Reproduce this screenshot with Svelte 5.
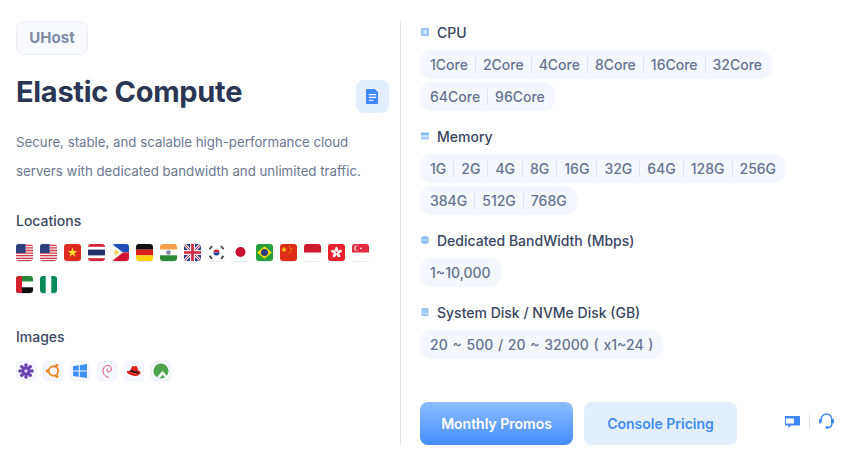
<script>
  const flags = ['us', 'us', 'vn', 'th', 'ph', 'de', 'in', 'gb', 'kr', 'jp', 'br', 'cn', 'id', 'hk', 'sg', 'ae', 'ng'];
  const images = ['rocky', 'ubuntu', 'windows', 'debian', 'redhat', 'alma'];

  const specs = [
    {
      title: 'CPU',
      icon: 'cpu',
      rows: [
        ['1Core', '2Core', '4Core', '8Core', '16Core', '32Core'],
        ['64Core', '96Core']
      ]
    },
    {
      title: 'Memory',
      icon: 'memory',
      rows: [
        ['1G', '2G', '4G', '8G', '16G', '32G', '64G', '128G', '256G'],
        ['384G', '512G', '768G']
      ]
    },
    { title: 'Dedicated BandWidth (Mbps)', icon: 'net', rows: [['1~10,000']] },
    { title: 'System Disk / NVMe Disk (GB)', icon: 'disk', rows: [['20 ~ 500 / 20 ~ 32000 ( x1~24 )']] }
  ];
</script>

{#snippet flag(id)}
  <svg class="flag" viewBox="0 0 17 17" aria-label={id}>
    {#if id === 'us'}
      <rect width="17" height="17" fill="#f6f0f2" />
      <path d="M0 1.300h17M0 3.900h17M0 6.500h17M0 9.100h17M0 11.700h17M0 14.300h17" stroke="#cf3a50" stroke-width="1.300" />
      <rect y="16" width="17" height="1" fill="#cf3a50" />
      <rect width="9.500" height="9" fill="#2b3f7e" />
    {:else if id === 'vn'}
      <rect width="17" height="17" fill="#de2b1f" />
      <path d="M8.500 3.600l1.200 3.400h3.500l-2.800 2.200 1 3.500-2.900-2.100-2.900 2.100 1-3.500L3.800 7h3.500z" fill="#fde02f" />
    {:else if id === 'th'}
      <rect width="17" height="17" fill="#fff" />
      <rect width="17" height="2.800" fill="#d8243c" />
      <rect y="14.200" width="17" height="2.800" fill="#d8243c" />
      <rect y="5.600" width="17" height="5.800" fill="#24316f" />
    {:else if id === 'ph'}
      <rect width="17" height="8.500" fill="#1f50b8" />
      <rect y="8.500" width="17" height="8.500" fill="#d3152f" />
      <path d="M0 0l11 8.500L0 17z" fill="#fbfbf6" />
      <circle cx="4.300" cy="8.500" r="1.900" fill="#f8cf4a" />
      <path d="M4.300 5v7M1.300 8.500h6M2.200 6.400l4.200 4.200M6.400 6.400l-4.200 4.200" stroke="#f8cf4a" stroke-width=".5" />
    {:else if id === 'de'}
      <rect width="17" height="5.700" fill="#111" />
      <rect y="5.700" width="17" height="5.700" fill="#dd1f1c" />
      <rect y="11.300" width="17" height="5.700" fill="#fbd30c" />
    {:else if id === 'in'}
      <rect width="17" height="5.700" fill="#f7a04a" />
      <rect y="5.700" width="17" height="5.700" fill="#fff" />
      <rect y="11.300" width="17" height="5.700" fill="#2a8a34" />
      <circle cx="8.500" cy="8.500" r="2.300" fill="#7f86b4" />
    {:else if id === 'gb'}
      <rect width="17" height="17" fill="#2b3f87" />
      <path d="M0 0l17 17M17 0L0 17" stroke="#f3e6ea" stroke-width="3" />
      <path d="M0 0l17 17M17 0L0 17" stroke="#cf2a43" stroke-width="1" />
      <path d="M8.500 0v17M0 8.500h17" stroke="#f3e6ea" stroke-width="5" />
      <path d="M8.500 0v17M0 8.500h17" stroke="#cf2a43" stroke-width="2.600" />
    {:else if id === 'kr'}
      <rect width="17" height="17" fill="#fff" />
      <path d="M5.500 8.500a3 3 0 0 1 6 0z" fill="#cf2135" />
      <path d="M5.500 8.500a3 3 0 0 0 6 0z" fill="#1c4c9c" />
      <path d="M1.500 5.200l2.600-3M13 2.200l2.600 3M1.500 11.800l2.600 3M13 14.800l2.600-3" stroke="#444" stroke-width="1.800" />
    {:else if id === 'jp'}
      <rect width="17" height="17" fill="#fff" />
      <circle cx="8.500" cy="8" r="5" fill="#c8102e" />
    {:else if id === 'br'}
      <rect width="17" height="17" fill="#25a03a" />
      <path d="M8.500 2.200L16 8.500l-7.500 6.300L1 8.500z" fill="#fbd90e" />
      <circle cx="8.500" cy="8.500" r="3.500" fill="#2d3c85" />
    {:else if id === 'cn'}
      <rect width="17" height="17" fill="#de2d16" />
      <path d="M4 2.600l.8 2.100h2.100L5.200 6l.6 2.100L4 6.900 2.200 8.100 2.800 6 1.100 4.700h2.100z" fill="#fcd21f" />
      <path d="M9 2h1v1H9zM10.500 4h1v1h-1zM10.500 6.500h1v1h-1zM9 8.500h1v1H9z" fill="#fcd21f" />
    {:else if id === 'id'}
      <rect width="17" height="17" fill="#fff" />
      <rect width="17" height="8.500" fill="#cf1a2e" />
    {:else if id === 'hk'}
      <rect width="17" height="17" fill="#e8202c" />
      <g fill="#fff">
        <ellipse cx="8.500" cy="5.300" rx="1.500" ry="2.500" />
        <ellipse cx="8.500" cy="5.300" rx="1.500" ry="2.500" transform="rotate(72 8.500 8.500)" />
        <ellipse cx="8.500" cy="5.300" rx="1.500" ry="2.500" transform="rotate(144 8.500 8.500)" />
        <ellipse cx="8.500" cy="5.300" rx="1.500" ry="2.500" transform="rotate(216 8.500 8.500)" />
        <ellipse cx="8.500" cy="5.300" rx="1.500" ry="2.500" transform="rotate(288 8.500 8.500)" />
      </g>
    {:else if id === 'sg'}
      <rect width="17" height="17" fill="#fff" />
      <rect width="17" height="8.500" fill="#e22a3c" />
      <circle cx="5" cy="4.300" r="2.700" fill="#fff" />
      <circle cx="6" cy="4.300" r="2.500" fill="#e22a3c" />
      <circle cx="9" cy="4.300" r=".9" fill="#fff" />
    {:else if id === 'ae'}
      <rect width="17" height="5.700" fill="#2a8a3a" />
      <rect y="5.700" width="17" height="5.700" fill="#fff" />
      <rect y="11.300" width="17" height="5.700" fill="#111" />
      <rect width="6" height="17" fill="#d4212f" />
    {:else if id === 'ng'}
      <rect width="17" height="17" fill="#fff" />
      <rect width="5.700" height="17" fill="#078a5a" />
      <rect x="11.300" width="5.700" height="17" fill="#078a5a" />
    {/if}
  </svg>
{/snippet}

{#snippet osIcon(id)}
  <span class="os">
    <svg viewBox="0 0 16 16" width="16" height="16" aria-label={id}>
      {#if id === 'rocky'}
        <g fill="#6a3fb0">
          <circle cx="8" cy="8" r="4.800" />
          <circle cx="8" cy="2" r="1.800" />
          <circle cx="8" cy="14" r="1.800" />
          <circle cx="2" cy="8" r="1.800" />
          <circle cx="14" cy="8" r="1.800" />
          <circle cx="3.800" cy="3.800" r="1.800" />
          <circle cx="12.200" cy="3.800" r="1.800" />
          <circle cx="3.800" cy="12.200" r="1.800" />
          <circle cx="12.200" cy="12.200" r="1.800" />
        </g>
        <circle cx="8" cy="8" r="1.800" fill="#d9c8f2" />
      {:else if id === 'ubuntu'}
        <circle cx="8.500" cy="8" r="4.700" fill="none" stroke="#e98a2b" stroke-width="1.900" />
        <circle cx="2.400" cy="8" r="1.700" fill="#e98a2b" />
        <circle cx="11.800" cy="2.400" r="1.700" fill="#e98a2b" />
        <circle cx="11.800" cy="13.600" r="1.700" fill="#e98a2b" />
      {:else if id === 'windows'}
        <path d="M1 3.200l5.800-.9v5.300H1zM7.800 2.200L15 1v6.600H7.800zM1 8.500h5.800v5.300L1 12.900zM7.800 8.500H15V15l-7.200-1.100z" fill="#3d8ff5" />
      {:else if id === 'debian'}
        <path d="M9.800 14.500C6 13.500 3.500 10.500 4 7c.5-3 3-5 5.500-4.500 2.500.5 3.500 3 2.500 5-.8 1.500-2.800 2-3.800.8-.7-.9-.3-2.300.8-2.500" fill="none" stroke="#d9446f" stroke-width="1" />
      {:else if id === 'redhat'}
        <path d="M4.500 7.500l1.300-3.700c.3-.8 1-.9 1.700-.6.700.3 1.300.2 2-.1.800-.3 1.400 0 1.600.8l1 3.300c1.200.6 2.400 1.500 2.400 2.700 0 1.500-2 1.600-4 1-2.700-.7-5.400-1.700-6.900-1.900C2.500 8.800 3 7.700 4.500 7.500z" fill="#d8231f" />
        <path d="M.8 8.500c0 2 4.500 4.500 9 4.500 2.500 0 3.700-.9 3.800-1.900-3 .3-8-1.200-10-2.800-1-.6-2.800-.8-2.800.2z" fill="#d8231f" />
        <path d="M4.200 7.400c2 1.300 5.500 2.300 8.800 2.100" fill="none" stroke="#111" stroke-width="1.300" />
      {:else if id === 'alma'}
        <circle cx="8" cy="8" r="7.500" fill="#4fa34d" />
        <path d="M3.500 14.500L9.500 8l5 5.500-2 1.500-3-3.200L7 15z" fill="#fff" />
      {/if}
    </svg>
  </span>
{/snippet}

{#snippet specIcon(id)}
  <svg class="spec-icon" viewBox="0 0 8 8" width="8" height="8" aria-hidden="true">
    {#if id === 'cpu'}
      <rect width="8" height="8" rx="1" fill="#9cc5fb" />
      <rect x="2.200" y="2.200" width="3.600" height="3.600" fill="#d8e8fe" />
    {:else if id === 'memory'}
      <path d="M0 1.500a1 1 0 0 1 1-1h6a1 1 0 0 1 1 1V3.500H0z" fill="#84b6fb" />
      <path d="M0 4.500h8v2a1 1 0 0 1-1 1H1a1 1 0 0 1-1-1z" fill="#a9cdfc" />
    {:else if id === 'net'}
      <circle cx="4" cy="4" r="4" fill="#8fbdfb" />
      <rect y="3.500" width="8" height="1" fill="#c9defd" />
    {:else}
      <rect x=".5" width="7" height="8" rx="1" fill="#9cc5fb" />
      <rect x="1.500" y="4.800" width="5" height="1" fill="#e3eefe" />
    {/if}
  </svg>
{/snippet}

<main class="panel">
  <section class="intro">
    <span class="badge">UHost</span>
    <div class="heading">
      <h1>Elastic Compute</h1>
      <button class="doc" aria-label="Documentation">
        <svg viewBox="0 0 14 16" width="13" height="15">
          <path d="M1 0h8.500L13 3.500V15a1 1 0 0 1-1 1H1a1 1 0 0 1-1-1V1a1 1 0 0 1 1-1z" fill="#3f88f6" />
          <path d="M3 6h8M3 9h8M3 12h5" stroke="#fff" stroke-width="1.200" />
        </svg>
      </button>
    </div>
    <p class="desc">Secure, stable, and scalable high-performance cloud servers with dedicated bandwidth and unlimited traffic.</p>

    <h2 class="locations">Locations</h2>
    <div class="flags">
      {#each flags as id}
        {@render flag(id)}
      {/each}
    </div>

    <h2 class="images">Images</h2>
    <div class="os-list">
      {#each images as id}
        {@render osIcon(id)}
      {/each}
    </div>
  </section>

  <section class="specs">
    {#each specs as spec}
      <div class="spec">
        <h3>{@render specIcon(spec.icon)}{spec.title}</h3>
        {#each spec.rows as row}
          <div class="chips">
            {#each row as value}
              <span class="chip">{value}</span>
            {/each}
          </div>
        {/each}
      </div>
    {/each}

    <div class="actions">
      <button class="btn primary">Monthly Promos</button>
      <button class="btn secondary">Console Pricing</button>
      <div class="tools">
        <svg viewBox="0 0 15 14" width="15" height="14" aria-label="Chat">
          <path d="M0 1h15v9.500H6l-2.500 2.500v-2.500H0z" fill="#3f88f6" />
          <rect x="1" y="3.500" width="8" height="5" fill="#fff" />
        </svg>
        <i></i>
        <svg viewBox="0 0 15 17" width="15" height="17" aria-label="Support">
          <path d="M2.200 8V6.300a5.300 5.300 0 0 1 10.600 0V11c0 2-1.500 3.500-4 3.500" fill="none" stroke="#3f88f6" stroke-width="1.500" />
          <rect x="0" y="6" width="2.600" height="4.500" rx="1" fill="#3f88f6" />
          <rect x="12.400" y="6" width="2.600" height="4.500" rx="1" fill="#3f88f6" />
          <circle cx="8" cy="14.500" r="1.400" fill="#3f88f6" />
        </svg>
      </div>
    </div>
  </section>
</main>

<style>
  :global(body) {
    margin: 0;
    background: #fff;
  }

  .panel {
    display: flex;
    height: 459px;
    box-sizing: border-box;
    padding: 21px 16px 14px;
    font-family: Inter, "Liberation Sans", sans-serif;
  }

  .intro {
    width: 373px;
    padding-right: 11px;
    flex-shrink: 0;
  }

  .badge {
    display: inline-block;
    box-sizing: border-box;
    height: 34px;
    width: 72px;
    line-height: 32px;
    text-align: center;
    font-size: 15px;
    font-weight: 700;
    color: #7d8aa8;
    background: #f9faff;
    border: 1px solid #ebeffb;
    border-radius: 8px;
  }

  .heading {
    display: flex;
    align-items: flex-start;
    justify-content: space-between;
    height: 33px;
    margin-top: 20px;
  }

  h1 {
    margin: 0;
    font-size: 29px;
    line-height: 34px;
    font-weight: 700;
    letter-spacing: -0.3px;
    color: #2b3654;
  }

  .doc {
    width: 33px;
    height: 33px;
    margin-top: 5px;
    padding: 0;
    display: grid;
    place-items: center;
    border: none;
    border-radius: 8px;
    background: #e3efff;
  }

  .desc {
    margin: 20px 0 0;
    font-size: 13.250px;
    line-height: 29px;
    color: #6b7690;
  }

  h2 {
    margin: 0;
    font-size: 14px;
    font-weight: 500;
    line-height: 20px;
    color: #3d4761;
  }

  .locations {
    margin-top: 25px;
  }

  .flags {
    display: flex;
    flex-wrap: wrap;
    gap: 15px 7px;
    margin-top: 13px;
  }

  .flag {
    width: 17px;
    height: 17px;
    border-radius: 3px;
    box-shadow: 0 1px 1px #e3e7f5;
  }

  .images {
    margin-top: 34px;
  }

  .os-list {
    display: flex;
    gap: 7px;
    margin-top: 14px;
  }

  .os {
    box-sizing: border-box;
    width: 20px;
    height: 20px;
    display: grid;
    place-items: center;
    background: #f5f8ff;
    border: 1px solid #eef2fc;
    border-radius: 4px;
  }

  .specs {
    flex: 1;
    display: flex;
    flex-direction: column;
    border-left: 1px solid #dfe3f0;
    padding-left: 19px;
  }

  .spec {
    display: flex;
    flex-direction: column;
    align-items: flex-start;
    gap: 3px;
    margin-bottom: 14px;
  }

  h3 {
    display: flex;
    align-items: center;
    gap: 8px;
    height: 22px;
    margin: 0 0 4px;
    font-size: 14px;
    font-weight: 500;
    color: #3a4560;
  }

  .spec-icon {
    margin-left: 1px;
  }

  .chips {
    display: flex;
    align-items: center;
    height: 29px;
    padding: 0 10px;
    background: #f4f7fe;
    border-radius: 12px;
  }

  .chip {
    padding: 0 7px;
    font-size: 14px;
    font-weight: 500;
    line-height: 16px;
    word-spacing: 1px;
    color: #667290;
    border-left: 1px solid #dfe3ee;
  }

  .chip:first-child {
    padding-left: 0;
    border-left: none;
  }

  .chip:last-child {
    padding-right: 0;
  }

  .actions {
    display: flex;
    align-items: center;
    gap: 11px;
    margin-top: auto;
  }

  .btn {
    width: 153px;
    height: 43px;
    padding: 0;
    border: none;
    border-radius: 8px;
    font-family: inherit;
    font-size: 14px;
    font-weight: 600;
  }

  .primary {
    color: #fff;
    background: linear-gradient(#8dbdff, #448dff);
  }

  .secondary {
    color: #428bf9;
    background: #e3efff;
  }

  .tools {
    display: flex;
    align-items: center;
    gap: 9px;
    margin: -4px 0 0 37px;
  }

  .tools i {
    width: 1px;
    height: 14px;
    background: #d6dff0;
  }
</style>
